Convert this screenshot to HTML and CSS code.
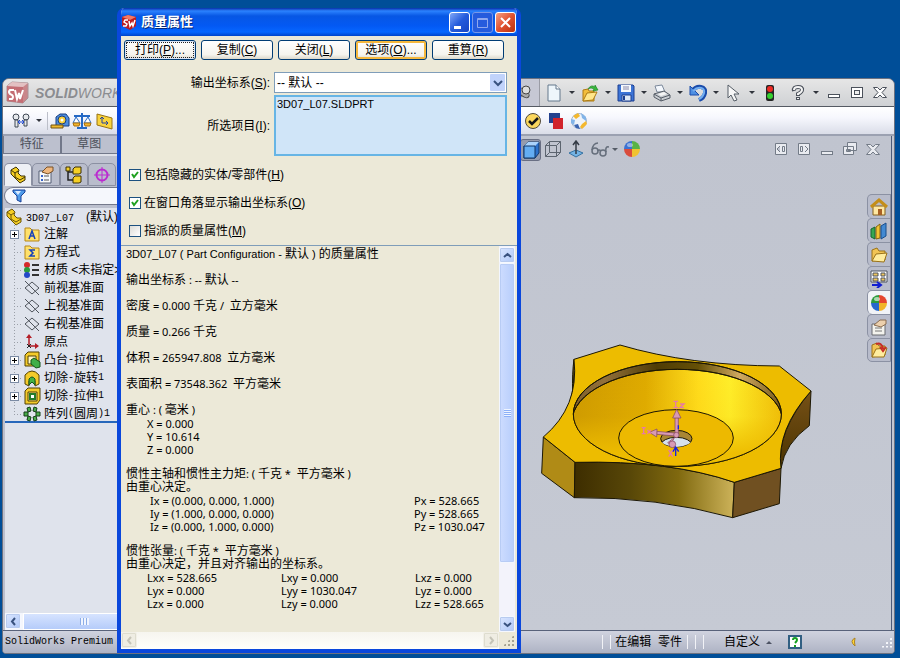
FILE: index.html
```html
<!DOCTYPE html>
<html lang="zh-CN">
<head>
<meta charset="utf-8">
<title>SolidWorks - 质量属性</title>
<link rel="stylesheet" href="styles.css">
</head>
<body>
<div class="desktop">
<main class="app">
  <header class="app-head">
    <div class="brand">
      <svg width="24" height="26" viewBox="0 0 24 26"><path d="M1 6 6 2l16 1v15l-5 5-16-2z" fill="#c9868a" stroke="#a89296"/><path d="M1 6 17 7v16L1 21z" fill="#c46e74"/><path d="M1 6 6 2l16 1-5 4z" fill="#e3c1c2"/><path d="M8 10H4q-2 2 0 4l2 1q2 2 0 4H3M9 10l2 9 2-6 1 6 3-9" fill="none" stroke="#fff" stroke-width="2"/></svg>
      <span class="brand-name"><b>SOLID</b>WORKS</span>
    </div>
    <nav class="quick">
      <button class="pin" aria-label="固定"><svg width="16" height="18" viewBox="0 0 16 18"><path d="M1 17 5 12" stroke="#555" stroke-width="2"/><ellipse cx="8" cy="9" rx="6" ry="3.500" transform="rotate(40 8 9)" fill="#aaa" stroke="#444"/><circle cx="10" cy="6" r="4" fill="#ddd" stroke="#444"/></svg></button>
      <button class="tool drop" aria-label="新建"><svg width="18" height="18" viewBox="0 0 18 18"><path d="M3 1h8l4 4v12H3z" fill="#eef6fb" stroke="#64788c"/><path d="M11 1v4h4" fill="#fff" stroke="#64788c"/></svg></button>
      <button class="tool drop" aria-label="打开"><svg width="18" height="18" viewBox="0 0 18 18"><path d="M2 17V6l5-1 1 2h5v10z" fill="#f2bd3b" stroke="#ad7b12"/><path d="M2 17 6 9l10-1-4 8z" fill="#ffe68a" stroke="#ad7b12"/><path d="M7 5q3-5 7-2V1l3 5-5 1 1-2q-3-2-6 0z" fill="#38b83b" stroke="#16801f" stroke-width=".6"/></svg></button>
      <button class="tool drop" aria-label="保存"><svg width="18" height="18" viewBox="0 0 18 18"><path d="M1 1h15l1 1v15H1z" fill="#3c74d6" stroke="#1c3f90"/><path d="M4 1h10v7H4z" fill="#f5f8fc"/><path d="M6 3h6M6 5h6" stroke="#88a"/><path d="M5 11h9v6H5z" fill="#dfe9f6" stroke="#1c3f90"/><path d="M7 12v4" stroke="#1c3f90" stroke-width="2"/></svg></button>
      <button class="tool drop" aria-label="打印"><svg width="18" height="18" viewBox="0 0 18 18"><path d="m4 8-2-6 7-1 3 7z" fill="#f3f7fc" stroke="#7c899b"/><path d="m1 10 10-3 6 4v3l-9 3-7-4z" fill="#c8ccd1" stroke="#555c66"/><path d="m1 10 7 4 9-3M8 14v3" fill="none" stroke="#555c66"/><path d="m5 10 6-2 3 2-6 2z" fill="#f5f5f5"/></svg></button>
      <button class="tool drop" aria-label="撤消"><svg width="18" height="18" viewBox="0 0 18 18"><path d="M3 7q4-5 9-4t4 6-6 7" fill="none" stroke="#1a4cab" stroke-width="4"/><path d="M1 2v9h9L7 8 5 6z" fill="#4e8fe3" stroke="#1a4cab"/><path d="M4 7q4-4 8-3t3 5-5 6" fill="none" stroke="#72aef0" stroke-width="2"/></svg></button>
      <button class="tool drop" aria-label="选择"><svg width="18" height="18" viewBox="0 0 18 18"><path d="M3 1v13l3-3 3 6 3-1-3-6h5z" fill="#f7f7f7" stroke="#555d66"/></svg></button>
      <button class="tool light" aria-label="重建"><svg width="10" height="18" viewBox="0 0 10 18"><rect x="1" y="1" width="8" height="16" rx="2" fill="#252525"/><circle cx="5" cy="5" r="3" fill="#ed2b24"/><circle cx="5" cy="12" r="3" fill="#35cf2f"/></svg></button>
      <button class="tool drop" aria-label="帮助"><svg width="18" height="18" viewBox="0 0 18 18"><path d="M5 7q-1-4 4-4t4 3q0 2-4 4v2M9 13v3" fill="none" stroke="#4c525c" stroke-width="4"/><path d="M5 6q0-3 4-3t4 3q0 2-4 4v1M9 14v1" fill="none" stroke="#f4f4f4" stroke-width="2"/></svg></button>
      <div class="win-buttons">
        <button class="tool" aria-label="最小化"><svg width="18" height="18" viewBox="0 0 18 18"><rect x="3.500" y="10.500" width="11" height="3" fill="#fff" stroke="#4b515b"/></svg></button>
        <button class="tool" aria-label="最大化"><svg width="18" height="18" viewBox="0 0 18 18"><rect x="3.500" y="3.500" width="11" height="10" fill="#fff" stroke="#4b515b"/><rect x="6.500" y="6.500" width="5" height="4" fill="#eee" stroke="#4b515b"/></svg></button>
        <button class="tool" aria-label="关闭程序"><svg width="18" height="18" viewBox="0 0 18 18"><path d="M2.500 3.500h4L9 6l2.500-2.500h4L11 8.500l4.500 5h-4L9 11l-2.500 2.500h-4L7 8.500z" fill="#fff" stroke="#4b515b"/></svg></button>
      </div>
    </nav>
  </header>

  <div class="commands">
    <div class="command-set">
      <button class="tool drop" aria-label="尺寸测量"><svg width="20" height="18" viewBox="0 0 20 18"><g fill="#e5e8ec" stroke="#3f4854"><circle cx="5" cy="5" r="3"/><circle cx="15" cy="5" r="3"/><path d="M4 8h3v7H4zM13 8h3v6h-3z"/></g><path d="M7 10h6m-2-2 2 2-2 2M9 8l-2 2 2 2" stroke="#1b45d0" fill="none"/></svg></button>
      <span class="rule"></span>
      <button class="tool" aria-label="测量"><svg width="20" height="18" viewBox="0 0 20 18"><path d="M6 14V5l4-3h6l3 4v8z" fill="#4c8ce0" stroke="#173e80"/><circle cx="12" cy="8" r="4" fill="#f8cf38" stroke="#173e80"/><circle cx="12" cy="8" r="1.500" fill="#fff"/><path d="M1 13h12v3H1z" fill="#efb92c" stroke="#705312"/></svg></button>
      <button class="tool" aria-label="质量属性"><svg width="20" height="18" viewBox="0 0 20 18"><path d="M10 1v15M2 4h16M5 16h10" stroke="#2569c5" stroke-width="2"/><path d="m4 5-3 6h7zm12 0-4 6h7z" fill="#fff" stroke="#2569c5"/><path d="M1 11h7l-1 3H2zM12 11h7l-1 3h-5z" fill="#f3b52c" stroke="#a87110"/></svg></button>
      <button class="tool" aria-label="剖面属性"><svg width="20" height="18" viewBox="0 0 20 18"><path d="m3 2 15 4v11L3 13z" fill="#f9d33c" stroke="#987314"/><path d="M8 5v6h6M6 7l2-2 2 2M12 9l2 2-2 2" fill="none" stroke="#24439d"/></svg></button>
    </div>
    <div class="command-set checks-set">
      <button class="tool" aria-label="检查"><svg width="18" height="18" viewBox="0 0 18 18"><circle cx="9" cy="9" r="7.500" fill="#fbd75e" stroke="#4f483a"/><path d="m5 9 3 3 6-6" fill="none" stroke="#161616" stroke-width="2.500"/></svg></button>
      <button class="tool" aria-label="比较"><svg width="18" height="18" viewBox="0 0 18 18"><path d="M2 1h11v10H2z" fill="#24418e"/><path d="M6 6h10v11H6z" fill="#d1232b"/></svg></button>
      <button class="tool" aria-label="分析"><svg width="18" height="18" viewBox="0 0 18 18"><circle cx="9" cy="9" r="7.500" fill="#eef3fa" stroke="#9fb3cd"/><path d="m3 4 5-3 2 3-4 3zM12 12l4-3 1 3-5 5-2-2z" fill="#f4b82e"/><path d="m11 1 5 4v4l-4-3zM1 7l4 1-1 5-3-2z" fill="#82b4e8"/><path d="m4 13 4-1 2 5-4-1z" fill="#3a63b0"/></svg></button>
    </div>
  </div>

  <div class="workspace">
    <aside class="side">
      <div class="mode-tabs"><button>特征</button><button>草图</button></div>
      <div class="icon-tabs">
        <button class="selected" aria-label="设计树"><svg width="18" height="18" viewBox="0 0 18 18"><path d="M2 4 7 1l3 3-1 3 3 3 4 0v4l-5 3-9-9z" fill="#f6cf23" stroke="#3e3305"/><path d="m2 4 4 3 3-2M6 7v4l5 3 5-3" fill="none" stroke="#3e3305"/></svg></button>
        <button aria-label="属性"><svg width="18" height="18" viewBox="0 0 18 18"><path d="M2 5h12v12H2z" fill="#f7f8fb" stroke="#555f74"/><path d="M7 10h5M7 14h5" stroke="#555"/><path d="M4 9h2v2H4zM4 13h2v2H4z" fill="#3762c8"/><path d="m5 6 5-5h6v4l-5 3z" fill="#efb77e" stroke="#795026"/></svg></button>
        <button aria-label="配置"><svg width="18" height="18" viewBox="0 0 18 18"><path d="M3 1v13h6M3 6h6" fill="none" stroke="#222" stroke-width="1.500"/><path d="M1 1h4v4H1zM8 3l2-2h6v6l-2 1H8zM8 12l2-2h6v6l-2 1H8z" fill="#f5cf25" stroke="#3a3108"/></svg></button>
        <button aria-label="尺寸专家"><svg width="18" height="18" viewBox="0 0 18 18"><circle cx="9" cy="9" r="5.500" fill="none" stroke="#bb2bd0" stroke-width="2"/><path d="M9 1v16M1 9h16" stroke="#bb2bd0"/></svg></button>
      </div>
      <div class="filter"><svg width="14" height="14" viewBox="0 0 14 14"><path d="M1 1h12v2L9 7v6l-4-2V7L1 3z" fill="#4f9bea" stroke="#173f96"/><path d="M3 2h6L6 6z" fill="#d7eaff"/></svg></div>
      <div class="tree-pane">
        <div class="root"><svg width="18" height="18" viewBox="0 0 18 18"><path d="M2 4 7 1l3 3-1 3 3 3 4 0v4l-5 3-9-9z" fill="#f6cf23" stroke="#6c5507"/><path d="m2 4 4 3 3-2M6 7v4l5 3 5-3" fill="none" stroke="#6c5507"/></svg><span><span class="mono">3D07_L07&nbsp; </span>(默认)</span></div>
        <ul class="tree">
          <li class="more"><svg width="18" height="18" viewBox="0 0 18 18"><path d="M2 16V3h5l2 2h7v11z" fill="#ffe16b" stroke="#b78716"/><path d="m6 14 3-8 3 8M7 11h4" stroke="#1741b8" stroke-width="1.500" fill="none"/></svg>注解</li>
          <li><svg width="18" height="18" viewBox="0 0 18 18"><path d="M2 16V3h5l2 2h7v11z" fill="#ffe16b" stroke="#b78716"/><path d="M12 7H7l3 3-3 3h5" stroke="#1741b8" stroke-width="1.500" fill="none"/></svg>方程式</li>
          <li><svg width="18" height="18" viewBox="0 0 18 18"><circle cx="4" cy="4" r="3" fill="#d72a2b"/><circle cx="4" cy="9" r="3" fill="#2c9c3e"/><circle cx="4" cy="14" r="3" fill="#2449c8"/><path d="M9 4h7M9 9h7M9 14h7" stroke="#333" stroke-width="2"/></svg>材质 &lt;未指定&gt;</li>
          <li><svg width="18" height="18" viewBox="0 0 18 18"><path d="m2 9 7-6 7 6-7 6zM2 2l14 14" fill="none" stroke="#4e535b"/></svg>前视基准面</li>
          <li><svg width="18" height="18" viewBox="0 0 18 18"><path d="m2 9 7-6 7 6-7 6zM2 2l14 14" fill="none" stroke="#4e535b"/></svg>上视基准面</li>
          <li><svg width="18" height="18" viewBox="0 0 18 18"><path d="m2 9 7-6 7 6-7 6zM2 2l14 14" fill="none" stroke="#4e535b"/></svg>右视基准面</li>
          <li><svg width="18" height="18" viewBox="0 0 18 18"><path d="M6 3v10h9" fill="none" stroke="#b41e27" stroke-width="1.500"/><path d="m3 5 3-4 3 4zM12 10l4 3-4 3z" fill="#b41e27"/><path d="m4 11 4 4M8 11l-4 4" stroke="#222"/></svg>原点</li>
          <li class="more"><svg width="18" height="18" viewBox="0 0 18 18"><path d="m2 4 3-3h11v10l-3 4H2z" fill="#f4cb2a" stroke="#514106"/><path d="M5 5h8v8H5z" fill="#fff7c5" stroke="#514106"/><path d="m8 9 3-2 6 4v5l-4 1-5-4z" fill="#3faf49" stroke="#15551c"/></svg>凸台<span class="mono">-</span>拉伸<span class="mono">1</span></li>
          <li class="more"><svg width="18" height="18" viewBox="0 0 18 18"><path d="M2 6q7-8 14 0v9l-4 2v-5q-3-5-6 0v5l-4-2z" fill="#f4cb2a" stroke="#514106"/><path d="M6 16v-6q3-4 6 0v6l-3-3z" fill="#45b244" stroke="#15551c"/></svg>切除<span class="mono">-</span>旋转<span class="mono">1</span></li>
          <li class="more"><svg width="18" height="18" viewBox="0 0 18 18"><path d="m2 4 3-3h12v12l-3 4H2z" fill="#f4cb2a" stroke="#514106"/><path d="M5 5h9v9H5z" fill="#fbe675" stroke="#514106"/><path d="M7 7h5v5H7z" fill="#fff" stroke="#247c2b" stroke-width="2"/></svg>切除<span class="mono">-</span>拉伸<span class="mono">1</span></li>
          <li><svg width="18" height="18" viewBox="0 0 18 18"><g fill="#48ad48" stroke="#163f19"><path d="M4 3l3-1 1 4-3 1zM14 3l-3-1-1 4 3 1zM1 7h4v4H1zM13 7h4v4h-4zM4 15l3 1 1-4-3-1zM14 15l-3 1-1-4 3-1z"/></g></svg>阵列<span class="mono">(</span>圆周<span class="mono">)1</span></li>
        </ul>
      </div>
      <div class="side-scroll"><button class="xp-arrow" aria-label="向左"><svg width="9" height="9" viewBox="0 0 9 9"><path d="M6 1 3 4.500 6 8" fill="none" stroke="#39527f" stroke-width="2"/></svg></button><div class="side-thumb"><i></i></div></div>
    </aside>

    <section class="viewport" aria-label="模型视图">
      <div class="view-bar">
        <div class="view-tools">
          <button class="tool active" aria-label="着色"><svg width="18" height="18" viewBox="0 0 18 18"><path d="m2 5 4-4h11v11l-4 5H2z" fill="#2c71ca" stroke="#123667"/><path d="m2 5 4-4h11l-4 4z" fill="#aad3fb"/><path d="M2 5h11v12H2z" fill="#64adf2" stroke="#123667"/></svg></button>
          <button class="tool" aria-label="线框"><svg width="18" height="18" viewBox="0 0 18 18"><path d="M1.500 5.500h11v11h-11zM5.500 1.500h11v11h-11zM1.500 5.500l4-4M12.500 5.500l4-4M12.500 16.500l4-4M1.500 16.500l4-4" fill="none" stroke="#5c646f"/></svg></button>
          <button class="tool" aria-label="视图定向"><svg width="18" height="18" viewBox="0 0 18 18"><path d="m2 13 7-3 7 3-7 4z" fill="#75b4e5" stroke="#3572a2"/><path d="M9 14V2M6 5l3-4 3 4" fill="none" stroke="#343b45" stroke-width="1.500"/></svg></button>
          <button class="tool glasses" aria-label="隐藏/显示"><svg width="18" height="18" viewBox="0 0 18 18"><g fill="none" stroke="#666f7c" stroke-width="1.500"><circle cx="4" cy="11" r="3"/><circle cx="12" cy="13" r="3"/><path d="M7 11q1-2 3 0M1 10q1-7 6-7M15 12q-1-6 3-5"/></g></svg></button>
          <button class="tool" aria-label="外观"><svg width="18" height="18" viewBox="0 0 18 18"><path d="M9 9V1a8 8 0 0 0-8 8z" fill="#3c72d2"/><path d="M9 9V1a8 8 0 0 1 8 8z" fill="#59b346"/><path d="M9 9H1a8 8 0 0 0 8 8z" fill="#d94c3c"/><path d="M9 9h8a8 8 0 0 1-8 8z" fill="#f0c331"/><ellipse cx="7" cy="5" rx="3" ry="2" fill="#fff" opacity=".45"/></svg></button>
        </div>
        <div class="doc-buttons">
          <button class="tool" aria-label="左窗格"><svg width="18" height="18" viewBox="0 0 18 18"><path d="M3.500 3.500h11v11h-11zM10.500 6.500h2v5h-2zM8 6 5 9l3 3" fill="#e9ebf0" stroke="#737b87"/></svg></button>
          <button class="tool" aria-label="右窗格"><svg width="18" height="18" viewBox="0 0 18 18"><path d="M3.500 3.500h11v11h-11zM5.500 6.500h2v5h-2zM10 6l3 3-3 3" fill="#e9ebf0" stroke="#737b87"/></svg></button>
          <button class="tool" aria-label="最小化文档"><svg width="18" height="18" viewBox="0 0 18 18"><rect x="3.500" y="11.500" width="11" height="3" fill="#e9ebf0" stroke="#737b87"/></svg></button>
          <button class="tool" aria-label="还原文档"><svg width="18" height="18" viewBox="0 0 18 18"><path d="M6.500 2.500h9v8h-9zM2.500 6.500h10v8h-10zM5.500 9.500h4v2h-4z" fill="#e9ebf0" stroke="#737b87"/></svg></button>
          <button class="tool" aria-label="关闭文档"><svg width="18" height="18" viewBox="0 0 18 18"><path d="M2.500 4.500h4L9 7l2.500-2.500h4L11 9.500l4.500 5h-4L9 12l-2.500 2.500h-4L7 9.500z" fill="#e9ebf0" stroke="#737b87"/></svg></button>
        </div>
      </div>
      <svg class="model" width="290" height="190" viewBox="0 0 870 570" role="img" aria-label="三维零件">
        <defs>
          <linearGradient id="front"><stop offset="0" stop-color="#3d2d00"/><stop offset=".35" stop-color="#584708"/><stop offset=".65" stop-color="#80690f"/><stop offset="1" stop-color="#cdb35a"/></linearGradient>
          <linearGradient id="bowl"><stop offset="0" stop-color="#cc9800"/><stop offset=".35" stop-color="#deaa00"/><stop offset=".6" stop-color="#ffdc1c"/><stop offset=".75" stop-color="#ffee2a"/><stop offset="1" stop-color="#efbc08"/></linearGradient>
          <linearGradient id="rim"><stop offset="0" stop-color="#80602b"/><stop offset=".15" stop-color="#92703b"/><stop offset=".4" stop-color="#4f3c05"/><stop offset=".6" stop-color="#655006"/><stop offset=".8" stop-color="#d0a961"/><stop offset="1" stop-color="#795b1b"/></linearGradient>
          <linearGradient id="right" x1="0" y1="0" x2="0" y2="1"><stop offset="0" stop-color="#765117"/><stop offset="1" stop-color="#4b3300"/></linearGradient>
          <linearGradient id="shade" x1="0" y1="0" x2="0" y2="1"><stop offset="0" stop-color="#edbc00" stop-opacity="0"/><stop offset=".45" stop-color="#edbc00" stop-opacity=".1"/><stop offset=".8" stop-color="#edbc00" stop-opacity=".95"/></linearGradient>
          <clipPath id="dish"><ellipse cx="442" cy="237" rx="312" ry="157"/></clipPath>
          <clipPath id="hole"><ellipse cx="439" cy="311" rx="47" ry="25"/></clipPath>
        </defs>
        <g stroke="#1c1704" stroke-width="3" stroke-linejoin="round">
          <path d="M843 168 838 272Q765 325 753 400Q738 290 843 168Z" fill="url(#right)"/>
          <path d="m40 306 95 76-2 106-98-73z" fill="#b08b16"/>
          <path d="M135 382Q420 375 613 442L608 548Q380 485 133 488Z" fill="url(#front)"/>
          <path d="m613 442 140-42-5 106-140 42z" fill="#705021"/>
          <path d="M132 73Q126 115 128 175L123 190Q134 145 132 73Z" fill="#8e742c"/>
          <path d="M132 73 270 30Q480 92 748 93L843 168Q738 285 753 400L613 442Q420 375 135 382L40 306Q148 215 132 73Z" fill="#edbc00"/>
          <ellipse cx="442" cy="237" rx="312" ry="157" fill="url(#rim)"/>
          <g clip-path="url(#dish)"><ellipse cx="442" cy="260" rx="316" ry="157" fill="url(#bowl)"/><ellipse cx="442" cy="260" rx="316" ry="157" fill="url(#shade)"/></g>
          <ellipse cx="442" cy="237" rx="312" ry="157" fill="none"/>
          <ellipse cx="438" cy="309" rx="172" ry="85" fill="#edb900"/>
          <ellipse cx="439" cy="311" rx="47" ry="25" fill="#a98634"/>
          <ellipse cx="439" cy="331" rx="47" ry="24" fill="#d6e1ed" clip-path="url(#hole)"/>
        </g>
        <g fill="#d89ab5" stroke="#7c435e" stroke-width="2"><path d="M435 248h10v54h-10zM380 289l55 5v9l-55-5zM434 307l-12 22-9-6z"/><path d="m428 249 12-26 13 26zM381 282l-23 10 22 14z"/><circle cx="439" cy="300" r="8"/><circle cx="427" cy="328" r="10"/></g>
        <g fill="none" stroke="#e67aa8" stroke-width="4"><path d="M430 199h14M437 199v19M430 218h14M450 207h12l-12 11h12M335 278h12M341 278v18M335 296h12M352 285l11 11M363 285l-11 11M416 345l12 20M428 345l-12 20"/></g>
        <path d="m429 350 8-14 9 14M437 338v25M445 271v12" fill="none" stroke="#1a22de" stroke-width="4"/>
      </svg>
      <nav class="task-tabs">
        <button aria-label="资源"><svg width="18" height="18" viewBox="0 0 18 18"><path d="M3 8h12v9H3z" fill="#ffe8a2" stroke="#84601c"/><path d="m1 9 8-7 8 7" fill="none" stroke="#c48e19" stroke-width="3"/><path d="M8 11h4v6H8z" fill="#a96024"/></svg></button>
        <button aria-label="设计库"><svg width="18" height="18" viewBox="0 0 18 18"><path d="m1 7 4-2v12l-4-2z" fill="#35a751" stroke="#176533"/><path d="m6 5 4-3v14l-4 1z" fill="#f1c334" stroke="#856512"/><path d="m11 4 5-3v13l-5 3z" fill="#4389d2" stroke="#194d8b"/></svg></button>
        <button aria-label="文件"><svg width="18" height="18" viewBox="0 0 18 18"><path d="M2 15V4l5-2 2 3h6v9z" fill="#f1c454" stroke="#9a7219"/><path d="m2 15 4-7 11-1-3 9z" fill="#ffed9e" stroke="#9a7219"/></svg></button>
        <button aria-label="视图调色板"><svg width="18" height="18" viewBox="0 0 18 18"><path d="M1 1h16v11H1z" fill="#fff" stroke="#4c5260"/><path d="M3 3h5v3H3zM3 8h5v3H3zM11 3h4v3h-4zM11 8h4v3h-4z" fill="#f0c75d" stroke="#4c5260"/><path d="M2 15h8m-3-3 4 3-4 3" fill="none" stroke="#101ed1" stroke-width="2"/></svg></button>
        <button class="selected" aria-label="外观"><svg width="18" height="18" viewBox="0 0 18 18"><path d="M9 9V1a8 8 0 0 0-8 8z" fill="#2e9b3d"/><path d="M9 9V1a8 8 0 0 1 8 8z" fill="#e5462e"/><path d="M9 9H1a8 8 0 0 0 8 8z" fill="#2867ce"/><path d="M9 9h8a8 8 0 0 1-8 8z" fill="#f1b528"/><ellipse cx="7" cy="5" rx="3" ry="2" fill="#fff" opacity=".6"/></svg></button>
        <button aria-label="自定义属性"><svg width="18" height="18" viewBox="0 0 18 18"><path d="M2 6h13v11H2z" fill="#f3f3ee" stroke="#686b71"/><path d="M5 10h7M5 13h7" stroke="#777"/><path d="m4 7 6-5h6v4l-5 3z" fill="#ecd0ad" stroke="#896c50"/></svg></button>
        <button aria-label="恢复"><svg width="18" height="18" viewBox="0 0 18 18"><path d="M2 16V4l5-2 2 3h6v9z" fill="#f1c454" stroke="#9a7219"/><path d="m2 16 4-8 11-1-3 9z" fill="#ffed9e" stroke="#9a7219"/><path d="M6 3q6-2 7 5m-3-2 3 4 3-4" fill="none" stroke="#c62d25" stroke-width="2"/></svg></button>
      </nav>
    </section>
  </div>

  <footer class="status">
    <span class="mono">SolidWorks Premium</span>
    <div class="status-right">
      <span class="ticks"></span><span class="editing">在编辑&nbsp; 零件</span><span class="ticks"></span><span class="ticks one"></span>
      <button class="custom">自定义</button>
      <svg class="help" width="14" height="14" viewBox="0 0 14 14"><path d="M1 1h12v12H1z" fill="#fff" stroke="#315f82" stroke-width="2"/><path d="M5 5q0-2 2-2t2 2q0 1-2 3M7 10v2" fill="none" stroke="#15a020" stroke-width="2"/></svg>
      <svg class="moon" width="6" height="10" viewBox="0 0 6 10"><path d="M4 1Q-2 4 4 9 3 5 4 1" fill="#ffd735" stroke="#ad8320"/></svg>
      <span class="grip"></span>
    </div>
  </footer>
</main>

<section class="dialog" role="dialog" aria-labelledby="dialog-title">
  <header class="title-bar">
    <svg width="16" height="16" viewBox="0 0 16 16"><path d="m1 3 6-2 8 2v9l-6 4-8-4z" fill="#bd1c20"/><path d="m1 3 6-2 8 2-6 3z" fill="#f37964"/><path d="M7 6H4L3 8l3 2-1 2H2M8 7l1 5 2-3 1 3 2-6" fill="none" stroke="#fff" stroke-width="1.500"/></svg>
    <h1 id="dialog-title">质量属性</h1>
    <div class="caption">
      <button aria-label="最小化"><svg width="19" height="19" viewBox="0 0 19 19"><path d="M4 13h7v3H4z" fill="#fff"/></svg></button>
      <button class="dim" aria-label="最大化" disabled><svg width="19" height="19" viewBox="0 0 19 19"><path d="M4.500 5.500h10v9h-10zM4 6.500h11" fill="none" stroke="#8fa8ef"/></svg></button>
      <button class="close" aria-label="关闭"><svg width="19" height="19" viewBox="0 0 19 19"><path d="m5 5 9 9M14 5l-9 9" stroke="#fff" stroke-width="2"/></svg></button>
    </div>
  </header>
  <div class="actions">
    <button class="focused">打印(<u>P</u>)...</button><button>复制(<u>C</u>)</button><button>关闭(<u>L</u>)</button><button class="hot">选项(<u>O</u>)...</button><button>重算(<u>R</u>)</button>
  </div>
  <div class="fields">
    <label for="coords">输出坐标系(<u>S</u>):</label>
    <select id="coords"><option>-- 默认 --</option></select>
    <label for="items">所选项目(<u>I</u>):</label>
    <textarea id="items" readonly>3D07_L07.SLDPRT</textarea>
  </div>
  <div class="checks">
    <label><input type="checkbox" checked>包括隐藏的实体/零部件(<u>H</u>)</label>
    <label><input type="checkbox" checked>在窗口角落显示输出坐标系(<u>O</u>)</label>
    <label><input type="checkbox">指派的质量属性(<u>M</u>)</label>
  </div>
  <div class="results">
    <article class="report">
      <p><span class="en name">3D07_L07 ( Part Configuration - </span>默认<span class="en name"> ) </span>的质量属性</p>
      <p>输出坐标系<span class="en"> : -- </span>默认<span class="en"> --</span></p>
      <p>密度<span class="en"> = 0.000 </span>千克<span class="en"> /&nbsp; </span>立方毫米</p>
      <p>质量<span class="en"> = 0.266 </span>千克</p>
      <p>体积<span class="en"> = 265947.808&nbsp; </span>立方毫米</p>
      <p>表面积<span class="en"> = 73548.362&nbsp; </span>平方毫米</p>
      <section>
        <h2>重心<span class="en"> : ( </span>毫米<span class="en"> )</span></h2>
        <table class="values"><tr><td>X = 0.000</td></tr><tr><td>Y = 10.614</td></tr><tr><td>Z = 0.000</td></tr></table>
      </section>
      <section>
        <h2>惯性主轴和惯性主力矩<span class="en">: ( </span>千克<span class="en"> *&nbsp; </span>平方毫米<span class="en"> )</span></h2>
        <h2>由重心决定。</h2>
        <table class="values axes"><tr><td>Ix = (0.000, 0.000, 1.000)</td><td>Px = 528.665</td></tr><tr><td>Iy = (1.000, 0.000, 0.000)</td><td>Py = 528.665</td></tr><tr><td>Iz = (0.000, 1.000, 0.000)</td><td>Pz = 1030.047</td></tr></table>
      </section>
      <section>
        <h2>惯性张量<span class="en">: ( </span>千克<span class="en"> *&nbsp; </span>平方毫米<span class="en"> )</span></h2>
        <h2>由重心决定，并且对齐输出的坐标系。</h2>
        <table class="values tensor"><tr><td>Lxx = 528.665</td><td>Lxy = 0.000</td><td>Lxz = 0.000</td></tr><tr><td>Lyx = 0.000</td><td>Lyy = 1030.047</td><td>Lyz = 0.000</td></tr><tr><td>Lzx = 0.000</td><td>Lzy = 0.000</td><td>Lzz = 528.665</td></tr></table>
      </section>
    </article>
    <div class="v-scroll">
      <button class="xp-arrow" aria-label="向上"><svg width="9" height="9" viewBox="0 0 9 9"><path d="M1 6 4.500 3 8 6" fill="none" stroke="#39527f" stroke-width="2"/></svg></button>
      <div class="v-thumb"><i></i></div>
      <button class="xp-arrow" aria-label="向下"><svg width="9" height="9" viewBox="0 0 9 9"><path d="m1 3 3.500 3L8 3" fill="none" stroke="#39527f" stroke-width="2"/></svg></button>
    </div>
    <div class="h-scroll">
      <button class="xp-arrow off" aria-label="向左" disabled><svg width="9" height="9" viewBox="0 0 9 9"><path d="M6 1 3 4.500 6 8" fill="none" stroke="#c5c4b8" stroke-width="2"/></svg></button>
      <button class="xp-arrow off" aria-label="向右" disabled><svg width="9" height="9" viewBox="0 0 9 9"><path d="m3 1 3 3.500L3 8" fill="none" stroke="#c5c4b8" stroke-width="2"/></svg></button>
    </div>
    <div class="corner"><span class="grip"></span></div>
  </div>
</section>
</div>
</body>
</html>
```
FILE: styles.css
```css
*, *::before, *::after { box-sizing: border-box; }
body { margin: 0; color: #000; font: 12px/18px "Liberation Sans", "Noto Sans CJK SC", sans-serif; }
button { margin: 0; padding: 0; border: 0; background: none; color: inherit; font: inherit; }
svg { display: block; flex: none; }
h1, h2, p, ul { margin: 0; padding: 0; font-weight: normal; }
.mono { font-family: "Liberation Mono", monospace; font-size: 10px; white-space: pre; }
.desktop { position: relative; height: 100vh; min-height: 640px; overflow: hidden; background: #004e98; }

/* Application window */
.app { position: absolute; top: 78px; right: 5px; bottom: 4px; left: 2px; display: flex; flex-direction: column; overflow: hidden; border: 1px solid #6c7180; border-radius: 7px 7px 4px 4px; background: #c3c7d2; }
.app-head { display: flex; flex: none; height: 28px; justify-content: space-between; border-bottom: 1px solid #555a63; background: linear-gradient(#e6e6e6, #cfd1d4); }
.brand { display: flex; align-items: center; gap: 5px; padding-left: 3px; color: #8b8c90; }
.brand-name { font: italic 14px/20px "Liberation Sans", sans-serif; }
.quick { display: flex; align-items: center; padding-right: 5px; }
.pin { align-self: stretch; display: flex; align-items: center; justify-content: center; width: 28px; margin-right: 5px; padding-right: 4px; border-right: 1px solid #9a9ca5; background: #c6c8d4; }
.tool { display: flex; align-items: center; justify-content: center; min-width: 18px; height: 20px; }
.drop { gap: 6px; width: 36px; justify-content: flex-start; }
.drop::after { content: ""; border: 3px solid transparent; border-top-color: #30343c; border-bottom: 0; }
.light { width: 16px; margin-right: 10px; }
.win-buttons { display: flex; gap: 5px; }
.commands { display: grid; grid-template-columns: 520px 1fr; flex: none; height: 29px; border-bottom: 2px solid #9ba1b1; background: linear-gradient(#fff, #f6f7fd 40%, #dadde8); }
.command-set { display: flex; align-items: center; gap: 2px; padding-left: 8px; }
.command-set .tool { width: 20px; }
.command-set .drop { gap: 5px; width: 34px; }
.rule { width: 1px; height: 18px; background: #bcbfc9; }
.checks-set { gap: 3px; padding-left: 0; }
.workspace { display: flex; flex: 1; min-height: 0; }
.side { display: flex; flex: none; flex-direction: column; width: 115px; background: #bcc0ce; }
.mode-tabs { display: grid; grid-template-columns: 1fr 1fr; height: 18px; color: #4c505a; }
.mode-tabs button { border: 1px solid #72788a; border-top: 0; line-height: 17px; }
.icon-tabs { display: flex; height: 32px; align-items: flex-end; padding: 0 0 0 1px; border-top: 2px solid #dfe1e9; }
.icon-tabs button { display: flex; width: 28px; height: 23px; align-items: center; justify-content: center; border: 1px solid #8b90a2; border-radius: 5px 5px 0 0; background: #b9bdcc; }
.icon-tabs .selected { border-bottom-color: #eef0f5; background: #eef0f5; }
.filter { height: 18px; margin: 1px 0 3px 1px; padding: 1px 0 0 7px; border: 1px solid #74798b; border-right: 0; border-radius: 9px 0 0 9px; background: #f5f7fc; }
.tree-pane { flex: 1; min-height: 0; overflow: hidden; margin-left: 2px; background: linear-gradient(#dfe3ec 213px, #2767bb 213px, #2767bb 215px, #dfe3ec 215px); }
.root { display: flex; gap: 3px; height: 17px; white-space: nowrap; }
.tree { margin-left: 9px; list-style: none; background: repeating-linear-gradient(#9a9fa8 0 1px, transparent 1px 3px) 0 0 / 1px 189px no-repeat; }
.tree li { display: flex; height: 18px; align-items: center; padding-left: 9px; white-space: nowrap; background: repeating-linear-gradient(90deg, #9a9fa8 0 1px, transparent 1px 3px) 0 9px / 9px 1px no-repeat; }
.tree svg { margin-right: 3px; }
.tree li.more { padding-left: 0; }
.more::before { content: ""; flex: none; width: 9px; height: 9px; margin: 0 4px 0 -4px; border: 1px solid #7b8ba4; background: linear-gradient(#000, #000) center / 5px 1px no-repeat, linear-gradient(#000, #000) center / 1px 5px no-repeat, #fff; }
.side-scroll { display: flex; flex: none; height: 17px; margin-left: 2px; background: #f4f6fc; }
.side-thumb { display: grid; flex: 1; place-items: center; margin-left: 2px; border: 1px solid #fff; background: linear-gradient(#d6e3ff, #b5ccfa); }
.side-thumb i { width: 9px; height: 7px; margin-left: 28px; background: repeating-linear-gradient(90deg, #8daee8 0 1px, #f0f5ff 1px 3px); }
.xp-arrow { display: flex; flex: none; width: 16px; height: 16px; align-items: center; justify-content: center; border: 1px solid #f5f8ff; border-radius: 2px; background: linear-gradient(135deg, #dae6ff, #b0c8f8); box-shadow: inset 0 0 0 1px #b8cbef; }
.viewport { display: grid; flex: 1; min-width: 0; grid-template-columns: 1fr 24px; grid-template-rows: 58px 1fr; margin-right: 2px; border-right: 1px solid #4c5a78; background: linear-gradient(#c0c4cf, #c6cad4); }
.view-bar { grid-column: 1 / 3; display: flex; align-items: flex-start; justify-content: space-between; padding: 3px 9px 0 402px; }
.view-tools, .doc-buttons { display: flex; gap: 5px; }
.view-tools .active { width: 21px; height: 22px; margin-right: -2px; border: 1px solid #696f83; border-radius: 3px; background: #959bad; }
.glasses { gap: 3px; width: 28px; }
.glasses::after { content: ""; border: 3px solid transparent; border-top-color: #555c67; border-bottom: 0; }
.model { justify-self: end; margin: 141px 47px 0 0; }
.task-tabs { display: flex; flex-direction: column; }
.task-tabs button { display: flex; height: 24px; align-items: center; justify-content: center; border: 1px solid #8b91a3; border-bottom-width: 0; border-radius: 5px 0 0 5px; background: #b8bccb; }
.task-tabs button:last-child { border-bottom-width: 1px; }
.task-tabs .selected { background: #f1f3f7; }
.status { display: flex; flex: none; height: 23px; align-items: center; justify-content: space-between; padding: 0 2px; border-top: 1px solid #58627a; background: linear-gradient(#d0d3df, #aeb3c4); }
.status-right { display: flex; align-items: center; }
.ticks { width: 9px; height: 14px; border: 1px solid #f1f2f6; border-width: 0 1px; }
.ticks.one { width: 8px; border-left: 0; }
.editing { padding: 0 5px 0 4px; }
.custom { display: flex; align-items: center; gap: 6px; margin-left: 20px; }
.custom::after { content: ""; border: 3px solid transparent; border-top: 0; border-bottom-color: #4c5263; }
.help { margin-left: 16px; }
.moon { margin: 0 24px 0 49px; }
.grip { width: 11px; height: 11px; background: radial-gradient(circle at 2px 2px, #f7f8fc 1px, transparent 1px) 0 0 / 4px 4px; clip-path: polygon(100% 0, 100% 100%, 0 100%); }

/* Mass properties dialog */
.dialog { position: absolute; top: 8px; bottom: 5px; left: 117px; display: flex; flex-direction: column; width: 404px; overflow: hidden; border: 4px solid #0a47dc; border-top: 0; border-radius: 7px 7px 0 0; background: #ece9d8; }
.title-bar { display: flex; flex: none; height: 28px; align-items: center; gap: 4px; margin: 0 -4px; padding: 0 5px 0 4px; background: linear-gradient(#0830a8, #2b82ff 3px, #0757e4 8px, #0359f4 18px, #0667ff 24px, #0044c9); }
.title-bar h1 { flex: 1; color: #fff; font: bold 13px/20px "Liberation Sans", "Noto Sans CJK SC", sans-serif; text-shadow: 1px 1px #032878; }
.caption { display: flex; gap: 2px; }
.caption button { width: 21px; height: 21px; border: 1px solid #fff; border-radius: 3px; background: linear-gradient(135deg, #81a7f7, #245bdc 50%, #1745c4); }
.caption .dim { border-color: #7898e8; background: #255bdd; }
.caption .close { background: linear-gradient(135deg, #f2a084, #e15230 50%, #b9300d); }
.actions { display: flex; gap: 5px; padding: 4px 0 0 3px; }
.actions button { width: 72px; height: 20px; border: 1px solid #003c74; border-radius: 3px; background: linear-gradient(#fff, #f5f4ee 75%, #dcd8cb); line-height: 18px; }
.actions .focused { outline: 1px dotted #222; outline-offset: -3px; box-shadow: inset 0 0 0 1px #d9e3f4; }
.actions .hot { box-shadow: inset 0 0 0 2px #f5b83d; }
.fields { display: grid; grid-template-columns: 149px 1fr; gap: 2px 4px; margin-top: 12px; padding-right: 10px; }
.fields label { align-self: center; text-align: right; }
.fields select { height: 21px; padding: 0 2px; appearance: none; border: 1px solid #7f9db9; border-radius: 0; color: #000; font: inherit; background: url("data:image/svg+xml,%3Csvg xmlns='http://www.w3.org/2000/svg' width='15' height='17'%3E%3Crect width='15' height='17' rx='1' fill='%23c1d3fb'/%3E%3Cpath d='m4 7 4 4 4-4' fill='none' stroke='%2339527f' stroke-width='2'/%3E%3C/svg%3E") right 1px center no-repeat #fff; }
.fields textarea { height: 61px; padding: 0 1px; resize: none; border: 2px solid #67b5e5; background: #d0e5f8; color: #000; font: 11px/15px "Liberation Sans", sans-serif; }
.checks { display: grid; grid-auto-rows: 28px; margin-top: 5px; padding-left: 8px; }
.checks label { display: flex; align-items: center; white-space: pre; }
.checks input { width: 12px; height: 12px; margin: 0 3px 0 0; appearance: none; border: 1px solid #1c5180; background: linear-gradient(135deg, #dcdcd7, #fff); }
.checks input:checked { background: url("data:image/svg+xml,%3Csvg xmlns='http://www.w3.org/2000/svg' width='10' height='10'%3E%3Cpath d='m2 4 2 3 4-5' fill='none' stroke='%2321a121' stroke-width='2'/%3E%3C/svg%3E") center no-repeat #fff; }
.results { display: grid; flex: 1; min-height: 0; grid-template-columns: 1fr 18px; grid-template-rows: 1fr 17px; border-top: 1px solid #7f9db9; }
.report { min-width: 0; overflow: hidden; padding: 2px 0 0 5px; line-height: 13px; white-space: nowrap; }
.report p { height: 13px; margin-bottom: 13px; }
.report section { margin-bottom: 12px; }
.report h2 { height: 13px; font-size: 12px; line-height: 13px; }
.en, .values { font-family: "Noto Sans", sans-serif; font-size: 11px; line-height: 13px; white-space: pre; }
.en { line-height: 1px; }
.name { font-family: "Liberation Sans", sans-serif; }
.values { margin-left: 21px; border-collapse: collapse; table-layout: fixed; }
.values td { height: 13px; padding: 0; }
.axes { width: 350px; margin-left: 24px; }
.axes td:first-child { width: 264px; }
.tensor { width: 351px; }
.tensor td { width: 134px; }
.tensor td:last-child { width: 83px; }
.v-scroll { display: flex; flex-direction: column; align-items: flex-start; padding-top: 1px; background: linear-gradient(90deg, #f3f3fb 16px, #ece9d8 16px); }
.v-thumb { display: grid; width: 16px; flex: 0 1 300px; margin-bottom: auto; place-items: center; border: 1px solid #f2f6ff; border-radius: 2px; background: linear-gradient(90deg, #cddcff, #b7cdfb); box-shadow: inset 0 0 0 1px #b8ccf5; }
.v-thumb i { width: 7px; height: 8px; background: repeating-linear-gradient(#eef4ff 0 1px, #8cb0f8 1px 2px); }
.h-scroll { display: flex; justify-content: space-between; background: linear-gradient(#f6f5ef, #fffffb); }
.off { border-color: #f2f0e8; background: #efede3; box-shadow: inset 0 0 0 1px #deddcf; }
.corner { display: flex; align-items: flex-end; justify-content: flex-end; padding: 3px; }
.corner .grip { background-image: radial-gradient(circle at 2px 2px, #a5a392 1px, transparent 1px); }
```
